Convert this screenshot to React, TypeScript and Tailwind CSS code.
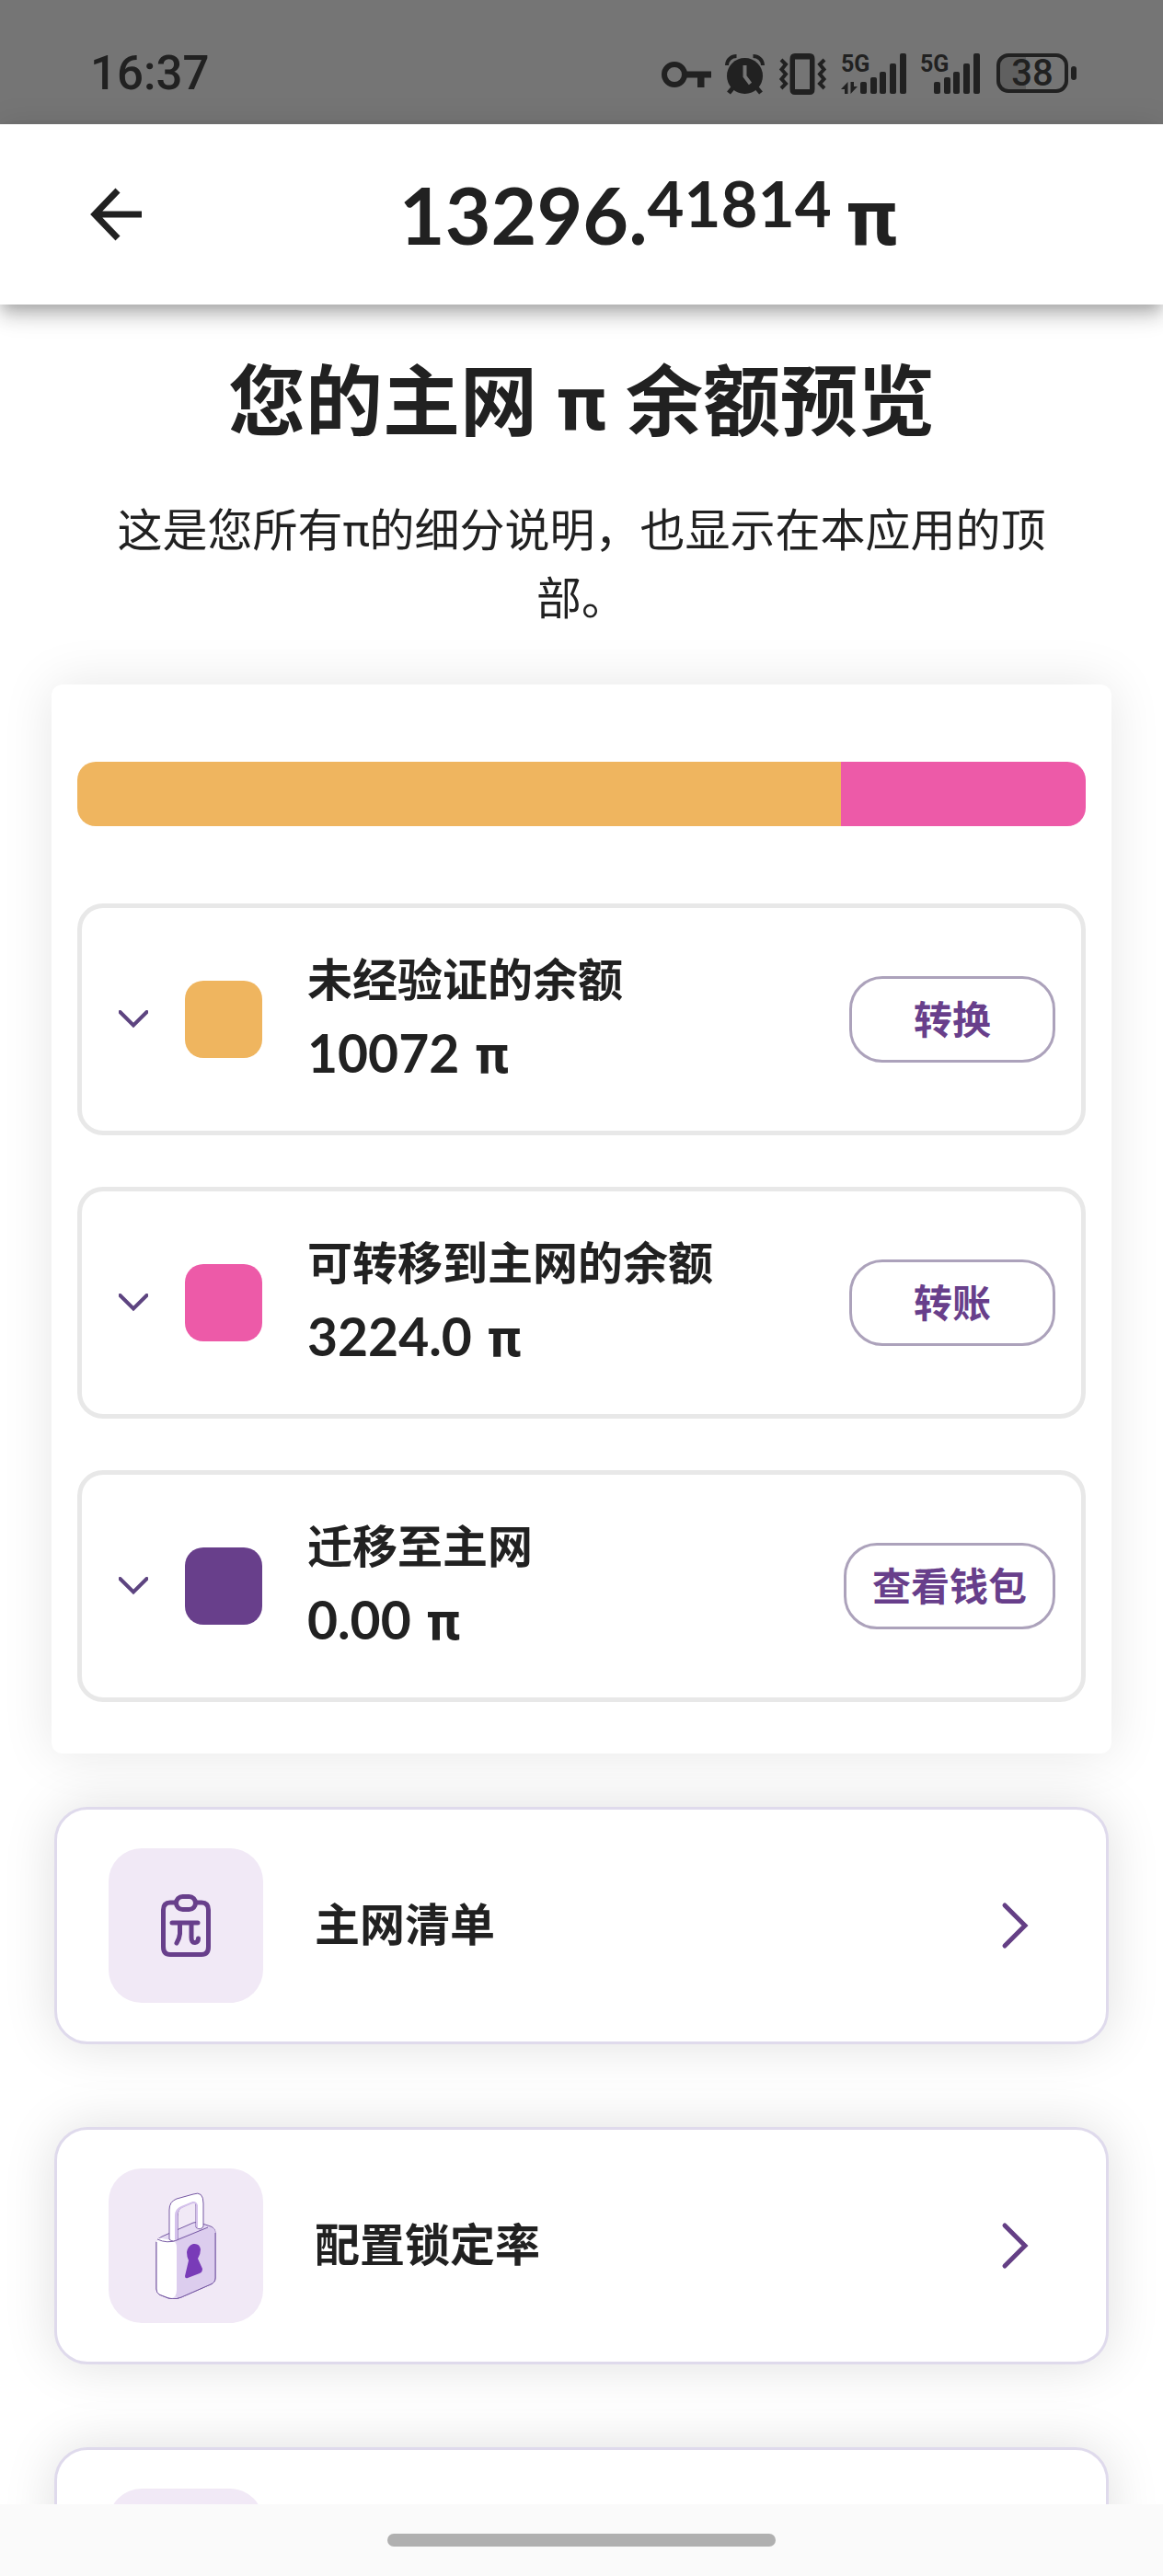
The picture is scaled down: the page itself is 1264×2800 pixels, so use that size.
import type { ReactNode } from "react";

const BALANCES = [
  {
    label: "未经验证的余额",
    amount: "10072",
    value: 10072,
    color: "#efb55f",
    action: "转换",
  },
  {
    label: "可转移到主网的余额",
    amount: "3224.0",
    value: 3224,
    color: "#ed5aa8",
    action: "转账",
  },
  {
    label: "迁移至主网",
    amount: "0.00",
    value: 0,
    color: "#683f8b",
    action: "查看钱包",
  },
];

const KeyIcon = () => (
  <svg width="54" height="46" viewBox="0 0 54 46" fill="none">
    <circle cx="14" cy="24" r="11" stroke="#212121" strokeWidth="6" />
    <path d="M27 20.5H54V27.5H46.5V38H39V27.5H27Z" fill="#212121" />
  </svg>
);

const AlarmIcon = () => (
  <svg width="43" height="46" viewBox="0 0 43 46" fill="none">
    <circle cx="21.5" cy="25.5" r="19.5" fill="#212121" />
    <path
      d="M2 14C2 8 7 4 12.5 4M41 14C41 8 36 4 30.5 4"
      stroke="#212121"
      strokeWidth="4"
    />
    <path d="M9 38L4 44M34 38L39 44" stroke="#212121" strokeWidth="5" />
    <path d="M21.5 14V26L27.5 34" stroke="#757575" strokeWidth="4" />
  </svg>
);

const VibrateIcon = () => (
  <svg width="53" height="46" viewBox="0 0 53 46" fill="none">
    <path
      fill="#212121"
      fillRule="evenodd"
      d="M18 1H34Q39.500 1 39.500 7V40Q39.500 46 34 46H18Q12.500 46 12.500 40V7Q12.500 1 18 1ZM18 7.500V40H34V7.500Z"
    />
    <path
      d="M3 8L8 13L3.500 18.500L8 23.500L3.500 29L8 34L3 39"
      stroke="#212121"
      strokeWidth="4"
    />
    <path
      d="M50 8L45 13L49.500 18.500L45 23.500L49.500 29L45 34L50 39"
      stroke="#212121"
      strokeWidth="4"
    />
  </svg>
);

const BARS = [
  { x: 0, y: 32 },
  { x: 11, y: 27 },
  { x: 21, y: 21 },
  { x: 32, y: 12 },
  { x: 43, y: 1 },
];

const SignalIcon = ({ active }: { active?: boolean }) => {
  const start = active ? 21 : 15;
  return (
    <svg
      width={start + 50}
      height="46"
      viewBox={`0 0 ${start + 50} 46`}
      fill="#212121"
      className="overflow-visible"
    >
      <text
        x="0"
        y="21"
        fontSize="25"
        fontWeight="700"
        fontFamily="Roboto, sans-serif"
      >
        5G
      </text>
      {BARS.map((bar) => (
        <rect
          key={bar.x}
          x={start + bar.x}
          y={bar.y}
          width="7"
          height={45 - bar.y}
          rx="2"
        />
      ))}
      {active && <path d="M7.500 32V45H4V40H0ZM10.500 45V32H14V37H18Z" />}
    </svg>
  );
};

const BatteryIcon = () => (
  <div className="flex items-center gap-[3px]">
    <div className="flex h-[43px] w-[78px] items-center justify-center rounded-[13px] border-4 border-[#212121] bg-linear-to-r from-[#606060] from-40% to-[#757575] to-40% text-[40px] leading-none">
      38
    </div>
    <div className="h-[15px] w-[6px] rounded-sm bg-[#212121]" />
  </div>
);

const StatusBar = () => (
  <div className="flex h-[135px] shrink-0 items-center justify-between bg-[#757575] pt-[24px] pr-[94px] pl-[98px] font-[Roboto,sans-serif] font-medium text-[#212121]">
    <span className="text-[51px] leading-none">16:37</span>
    <div className="flex items-center gap-[15px]">
      <KeyIcon />
      <AlarmIcon />
      <VibrateIcon />
      <SignalIcon active />
      <SignalIcon />
      <div className="ml-[3px]">
        <BatteryIcon />
      </div>
    </div>
  </div>
);

const Header = () => (
  <header className="relative z-10 flex h-[196px] shrink-0 items-center bg-white pr-[10px] pl-[98px] shadow-[0_7px_14px_-4px_rgba(0,0,0,0.2),0_14px_18px_0_rgba(0,0,0,0.14),0_4px_35px_0_rgba(0,0,0,0.12)]">
    <button type="button" aria-label="返回">
      <svg width="57" height="58" viewBox="0 0 57 58" fill="none">
        <path d="M56 29H6M30 3L5 29L30 55" stroke="#212121" strokeWidth="7" />
      </svg>
    </button>
    <p className="flex flex-1 items-baseline justify-center pt-[4px] text-[86px] leading-none font-bold">
      13296.
      <span className="-translate-y-[19px] text-[69px]">41814</span>
      <span className="ml-[16px] font-[Roboto]">π</span>
    </p>
  </header>
);

const BalanceRow = ({ item }: { item: (typeof BALANCES)[number] }) => (
  <li className="flex h-[252px] items-center rounded-[28px] border-[5px] border-[#e8e8e8] pr-[28px] pl-[40px]">
    <button type="button" aria-label={`展开${item.label}`}>
      <svg width="32" height="20" viewBox="0 0 32 20" fill="none">
        <path
          d="M1.500 2L16 16.500L30.500 2"
          stroke="#5d4480"
          strokeWidth="4"
          strokeLinecap="round"
        />
      </svg>
    </button>
    <span
      className="ml-[40px] size-[84px] rounded-[20px]"
      style={{ backgroundColor: item.color }}
    />
    <div className="ml-[49px] flex-1 pb-[6px] font-bold">
      <h2 className="text-[49px] leading-[80px]">{item.label}</h2>
      <p className="text-[57px] leading-[80px]">
        {item.amount} <span className="ml-[3px] font-[Roboto]">π</span>
      </p>
    </div>
    <button
      type="button"
      className="h-[94px] min-w-[224px] rounded-[36px] border-3 border-[#aca2bb] px-[28px] text-[42px] leading-none font-bold text-[#683f8b]"
    >
      {item.action}
    </button>
  </li>
);

const MenuCard = ({ icon, label }: { icon?: ReactNode; label?: string }) => (
  <a
    href="#"
    className="flex h-[258px] items-center rounded-[36px] border-3 border-[#dfdaec] bg-white pr-[82px] pl-[56px] shadow-[0_0_56px_0_rgba(0,0,0,0.13)]"
  >
    <span className="flex size-[168px] items-center justify-center rounded-[36px] bg-[#f1e9f6]">
      {icon}
    </span>
    <span className="ml-[56px] flex-1 pb-[4px] text-[49px] leading-[72px] font-bold">
      {label}
    </span>
    <svg width="32" height="52" viewBox="0 0 32 52" fill="none">
      <path
        d="M4 4L26 26L4 48"
        stroke="#643f85"
        strokeWidth="5"
        strokeLinecap="round"
      />
    </svg>
  </a>
);

const ChecklistIcon = () => (
  <svg width="56" height="70" viewBox="0 0 56 70" fill="none">
    <g stroke="#683f8b" strokeWidth="5" strokeLinecap="round">
      <path d="M17 10H11Q3.500 10 3.500 18V58Q3.500 66.500 11 66.500H45Q52.500 66.500 52.500 58V18Q52.500 10 45 10H39" />
      <rect x="17.500" y="3.500" width="21" height="14" rx="7" />
      <path d="M13 32H41M21.500 33V44Q21 49 18 54M34 33V48Q34 54 38 53.500Q41.500 53 41.500 49" />
    </g>
  </svg>
);

const LockIcon = () => (
  <svg width="68" height="116" viewBox="0 0 68 116" fill="none">
    <g stroke="#7658a3" strokeWidth="1" strokeLinejoin="round">
      <path
        d="M2 54Q3 50 8 48L42 33Q47 31 52 34L61 37Q66 39 66 44V93Q66 98 61 100L29 114Q20 118 10 113L5 111Q2 109 2 105Z"
        fill="#e4d9f2"
      />
      <path
        d="M24 50L58 38Q66 37 66 44V93Q66 98 61 100L29 114Q22 116 22 108Z"
        fill="#dccdee"
        stroke="none"
      />
      <path
        d="M2 54Q2 49 8 50L18 52Q24 53 24 60V106Q24 115 17 115L5 111Q2 109 2 105Z"
        fill="#fff"
        stroke="none"
      />
      <path d="M2 54V105Q2 109 5 111L10 113Q20 118 29 114L61 100Q66 98 66 93V44" />
      <path d="M3 51Q14 56 24 52L58 38" />
      <path
        d="M16 51V19Q16 10 24 7L42 2Q53 -2 53 12V37Q50 42 45 38V15Q45 9 39 12L30 16Q25 18 25 26V51Q20 55 16 51Z"
        fill="#fff"
      />
    </g>
    <path
      d="M22 52V25Q22 18 29 15L39 11Q45 8 47 14V39Q45 38 45 36V15Q45 10 39 13L30 17Q25 19 25 26V51Z"
      fill="#d4c1eb"
    />
    <path
      d="M35 65Q36 58 42 56Q49 55 50 62Q50 67 47 72L52 83Q52 87 49 88L36 93Q33 94 33 91L37 74Q35 70 35 65Z"
      fill="#793bb8"
    />
  </svg>
);

const App = () => {
  const total = BALANCES.reduce((sum, item) => sum + item.value, 0);

  return (
    <div className="flex h-screen w-full flex-col bg-white font-[Lato,'Noto_Sans_CJK_SC',sans-serif] text-[#212121]">
      <StatusBar />
      <Header />

      <main className="min-h-0 flex-1 overflow-y-auto px-[56px] pt-[46px] [scrollbar-width:none]">
        <h1 className="text-center font-[Roboto,'Noto_Sans_CJK_SC',sans-serif] text-[84px] leading-[124px] font-bold">
          您的主网 π 余额预览
        </h1>
        <p className="mt-[40px] px-[56px] text-center font-[Roboto,'Noto_Sans_CJK_SC',sans-serif] text-[49px] leading-[74px]">
          这是您所有π的细分说明，也显示在本应用的顶部。
        </p>

        <section className="mt-[55px] rounded-xl bg-white px-[28px] pt-[84px] pb-[56px] shadow-[0_0_56px_0_rgba(0,0,0,0.1)]">
          <div className="flex h-[70px] overflow-hidden rounded-[20px]">
            {BALANCES.map((item) => (
              <div
                key={item.label}
                style={{
                  width: `${(item.value / total) * 100}%`,
                  backgroundColor: item.color,
                }}
              />
            ))}
          </div>
          <ul className="mt-[84px] flex flex-col gap-[56px]">
            {BALANCES.map((item) => (
              <BalanceRow key={item.label} item={item} />
            ))}
          </ul>
        </section>

        <nav className="mx-[3px] mt-[58px] flex flex-col gap-[90px]">
          <MenuCard icon={<ChecklistIcon />} label="主网清单" />
          <MenuCard icon={<LockIcon />} label="配置锁定率" />
          <MenuCard />
        </nav>
      </main>

      <footer className="z-10 flex h-[78px] shrink-0 justify-center bg-[#fafafa] pt-[32px]">
        <div className="h-[14px] w-1/3 rounded-full bg-[#b0b0b0]" />
      </footer>
    </div>
  );
};

export default App;
